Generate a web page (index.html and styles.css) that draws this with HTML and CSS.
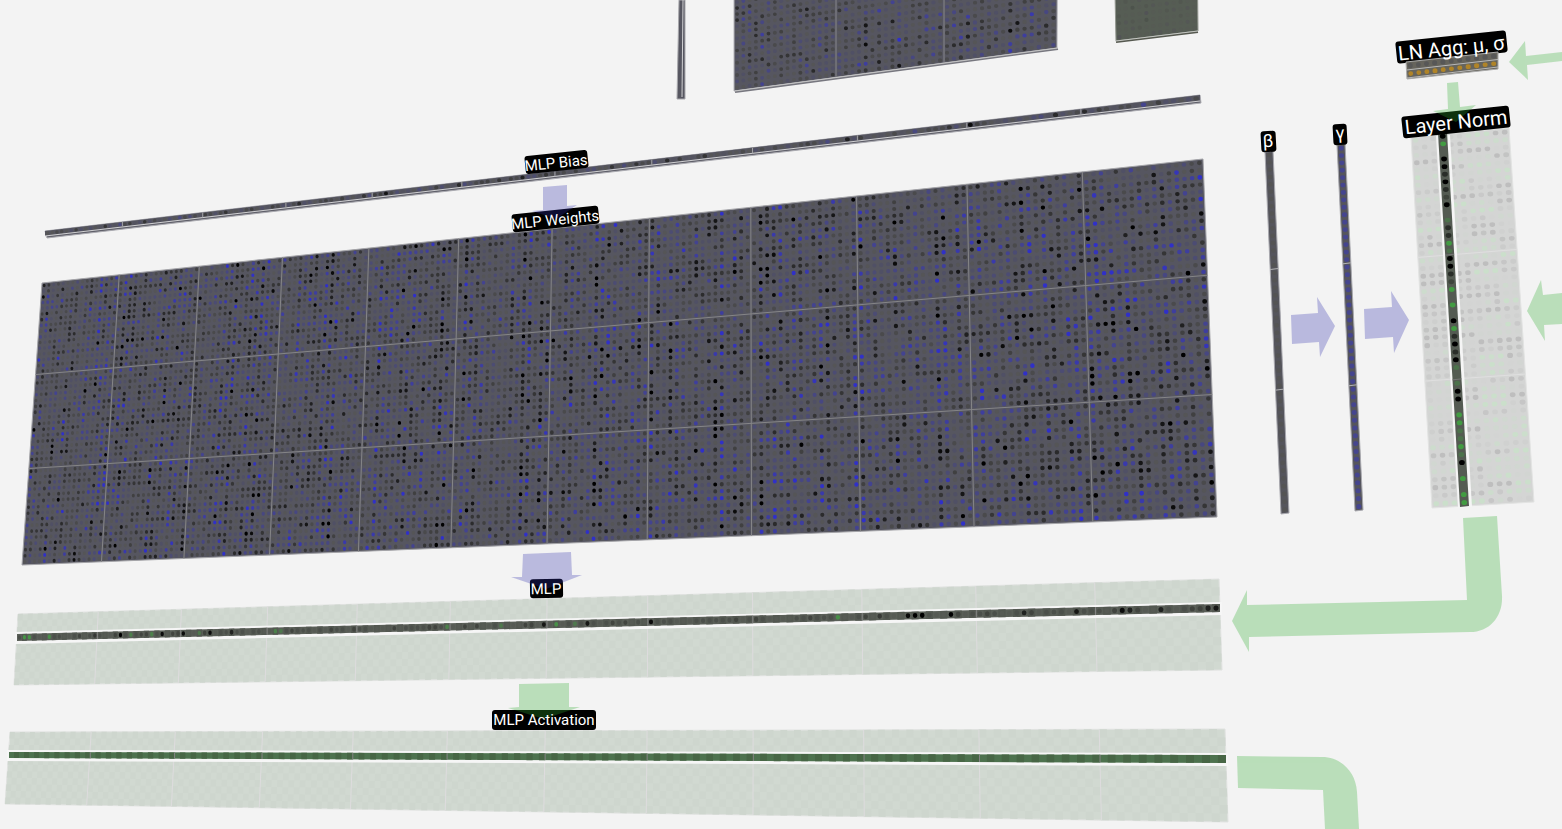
FILE: index.html
```
<!DOCTYPE html>
<html lang="en">
<head>
<meta charset="utf-8">
<title>Transformer layer view</title>
<link rel="stylesheet" href="styles.css">
</head>
<body>
<main class="view">
<svg class="scene" viewBox="0 0 1562 829" preserveAspectRatio="xMidYMid slice" role="img" aria-label="MLP and layer norm of a transformer block">
  <g id="panels"></g>
  <g class="plates">
    <rect x="525" y="153" width="63" height="18" rx="3" transform="rotate(-6 556 162)"/>
    <rect x="512" y="210" width="87" height="18" rx="3" transform="rotate(-6 555 219)"/>
    <rect x="530" y="579" width="33" height="19" rx="3" transform="rotate(-1 546 588)"/>
    <rect x="492" y="710" width="104" height="20" rx="3"/>
    <rect x="1396" y="36" width="111" height="22" rx="3" transform="rotate(-6 1451 47)"/>
    <rect x="1402" y="111" width="108" height="22" rx="3" transform="rotate(-6 1456 122)"/>
    <rect x="1261" y="131" width="15" height="21" rx="3" transform="rotate(-3 1268 142)"/>
    <rect x="1333" y="124" width="14" height="21" rx="3" transform="rotate(-3 1340 134)"/>
  </g>
  <g id="front"></g>
  <g class="arrows weight">
    <path d="M543 187L567 185L567 206L577 205L556 219L532 211L543 210Z"/>
    <path d="M523 554L571 552L572 575L582 575L546 589L511 577L522 577Z"/>
    <path d="M1291 315L1318 313L1317 297L1335 326L1320 357L1319 342L1292 344Z"/>
    <path d="M1364 309L1392 307L1391 291L1409 320L1394 353L1393 337L1365 339Z"/>
  </g>
  <g class="arrows flow">
    <path d="M519 684L569 683L569 707L580 707L544 719L508 708L519 707Z"/>
    <path d="M1447 83L1458 82L1460 107L1476 105L1456 122L1433 111L1448 109Z"/>
    <path d="M1509 62L1525 41L1526 56L1562 52V61L1527 65L1528 80Z"/>
    <path d="M1527 311L1541 280L1543 295L1562 293V324L1544 325L1545 341Z"/>
    <path d="M1463 518L1497 516L1502 596C1503 616 1490 632 1470 632L1249 637L1249 652L1232 621L1247 590L1247 605L1467 600Z"/>
    <path d="M1237 756L1322 757C1341 757 1356 772 1357 792L1359 829H1325L1323 790L1238 788Z"/>
  </g>
  <g class="names">
    <text x="556" y="168" transform="rotate(-6 556 162)">MLP Bias</text>
    <text x="555" y="225" transform="rotate(-6 555 219)">MLP Weights</text>
    <text x="546" y="594" transform="rotate(-1 546 588)">MLP</text>
    <text x="544" y="725">MLP Activation</text>
    <text class="large" x="1451" y="55" transform="rotate(-6 1451 47)">LN Agg: μ, σ</text>
    <text class="large" x="1456" y="129" transform="rotate(-6 1456 122)">Layer Norm</text>
    <text class="mid" x="1268" y="147" transform="rotate(-3 1268 142)">β</text>
    <text class="mid" x="1340" y="139" transform="rotate(-3 1340 134)">γ</text>
  </g>
</svg>
</main>
<script src="scene.js"></script>
</body>
</html>
```
FILE: styles.css
```
body {
  margin: 0;
  background: #f3f3f3;
  font-family: Roboto, "Liberation Sans", sans-serif;
}
.view {
  height: 100vh;
  overflow: hidden;
}
.scene {
  display: block;
  width: 100%;
  height: 100%;
}
.plates {
  fill: #000;
}
.arrows {
  opacity: 0.29;
}
.arrows.weight {
  fill: #3030ae;
}
.arrows.flow {
  fill: #30ae30;
}
.names {
  fill: #fff;
  font-size: 15px;
  text-anchor: middle;
}
.names .mid {
  font-size: 18px;
}
.names .large {
  font-size: 20px;
}
```
FILE: scene.js
```
const NS = 'http://www.w3.org/2000/svg';
let seed = 20231;
function rnd() {
  seed = (seed + 0x6D2B79F5) | 0;
  let t = Math.imul(seed ^ (seed >>> 15), 1 | seed);
  t = (t + Math.imul(t ^ (t >>> 7), 61 | t)) ^ t;
  return ((t ^ (t >>> 14)) >>> 0) / 4294967296;
}
function gauss() {
  return Math.sqrt(-2 * Math.log(rnd() + 1e-9)) * Math.cos(6.2832 * rnd());
}
const panels = document.getElementById('panels');
const front = document.getElementById('front');

function path(parent, d, attrs) {
  const el = document.createElementNS(NS, 'path');
  el.setAttribute('d', d);
  for (const k in attrs) el.setAttribute(k, attrs[k]);
  parent.appendChild(el);
}
const persp = (t, k) => t / (t + (1 - t) * k);

// A quad given clockwise from the top left, split into cols x rows cells.
function panel(q, cols, rows, ku, kv) {
  const at = (c, r) => {
    const u = persp(c / cols, ku), v = persp(r / rows, kv);
    const x0 = q[0][0] + (q[1][0] - q[0][0]) * u, y0 = q[0][1] + (q[1][1] - q[0][1]) * u;
    const x1 = q[3][0] + (q[2][0] - q[3][0]) * u, y1 = q[3][1] + (q[2][1] - q[3][1]) * u;
    return [x0 + (x1 - x0) * v, y0 + (y1 - y0) * v];
  };
  return { at, cols, rows };
}
const f = p => p[0].toFixed(2) + ' ' + p[1].toFixed(2);
function area(p, c0, r0, c1, r1) {
  return 'M' + f(p.at(c0, r0)) + 'L' + f(p.at(c1, r0)) + 'L' + f(p.at(c1, r1)) + 'L' + f(p.at(c0, r1)) + 'Z';
}
function line(p, c0, r0, c1, r1) {
  return 'M' + f(p.at(c0, r0)) + 'L' + f(p.at(c1, r1));
}
function dot(p, c, r, s) {
  const a = p.at(c, r), b = p.at(c + 1, r), d = p.at(c, r + 1), m = p.at(c + 0.5, r + 0.5);
  const rx = Math.hypot(b[0] - a[0], b[1] - a[1]) * s, ry = Math.hypot(d[0] - a[0], d[1] - a[1]) * s;
  return `M${(m[0] - rx).toFixed(2)} ${m[1].toFixed(2)}a${rx.toFixed(2)} ${ry.toFixed(2)} 0 1 0 ${(2 * rx).toFixed(2)} 0a${rx.toFixed(2)} ${ry.toFixed(2)} 0 1 0 ${(-2 * rx).toFixed(2)} 0`;
}
function mix(a, b, t) {
  return 'rgb(' + a.map((x, i) => Math.round(x + (b[i] - x) * t)).join(',') + ')';
}
function dots(parent, p, size, value, low, pos, neg) {
  const buckets = {};
  for (let r = 0; r < p.rows; r++) for (let c = 0; c < p.cols; c++) {
    const v = value(c, r);
    if (v === null) continue;
    const k = Math.max(-8, Math.min(8, Math.round(v * 8)));
    buckets[k] = (buckets[k] || '') + dot(p, c, r, size);
  }
  for (const k in buckets) path(parent, buckets[k], { fill: mix(low, k > 0 ? pos : neg, Math.abs(k) / 8) });
}
function splits(parent, p, stroke, horizontal = true) {
  let d = '';
  for (let c = 16; c < p.cols; c += 16) d += line(p, c, 0, c, p.rows);
  if (horizontal) for (let r = 16; r < p.rows; r += 16) d += line(p, 0, r, p.cols, r);
  path(parent, d, { stroke, 'stroke-width': 1, fill: 'none' });
}
const SLATE = '#565660', GREY = [85, 85, 87], BLUE = [48, 48, 200], BLACK = [0, 0, 0];
function weights(p, gain) {
  const colScale = Array.from({ length: p.cols }, () => 0.5 + rnd());
  const colBias = Array.from({ length: p.cols }, () => gauss() * 0.08);
  return c => (gauss() * 0.52 * colScale[c] + colBias[c]) * gain;
}

// Upper weights
const upper = panel([[734, -100], [1058, -163], [1057, 48], [734, 91]], 48, 32, 1.083, 1.04);
path(panels, area(upper, 0, 0, 48, 32), { fill: SLATE, stroke: '#b5b5ba' });
dots(panels, upper, 0.3, weights(upper, 0.5), GREY, BLUE, BLACK);
path(panels, 'M836 0V78M944 0V64', { stroke: '#85858a' });
path(panels, 'M735 92L1058 49', { stroke: '#77777f', 'stroke-width': 2 });
path(panels, 'M735 91L1058 48', { stroke: '#c4c4c4', 'stroke-width': 1 });

// Upper bias
path(panels, 'M679 0H685V99H677Z', { fill: SLATE, stroke: '#a8a8ac' });
path(panels, 'M683 0L682 97', { stroke: '#d2d2d4', 'stroke-width': 1 });

// Upper residual block
const block = panel([[1114, -56], [1197, -66], [1198, 31], [1116, 41]], 12, 14, 1, 1);
path(panels, area(block, 0, 0, 12, 14), { fill: '#565d54', stroke: '#92968f' });
dots(panels, block, 0.3, () => gauss() * 0.08, [86, 91, 84], [70, 60, 90], [50, 60, 50]);
path(panels, 'M1116 42L1198 32', { stroke: '#55584f', 'stroke-width': 2 });
path(panels, 'M1116 41L1198 31', { stroke: '#c4c6c2' });

// MLP bias
const bias = panel([[45, 231], [1200, 95], [1200, 101], [45, 236]], 192, 1, 1.265, 1);
path(panels, 'M45 231L1200 95L1201 103L47 238Z', { fill: '#60606a', stroke: '#aaaab0', 'stroke-width': 1 });
path(panels, area(bias, 0, 0, 192, 1), { fill: SLATE });
dots(panels, bias, 0.36, () => gauss() * 0.25, GREY, [65, 65, 150], BLACK);
path(panels, line(bias, 0, 1, 192, 1), { stroke: '#d0d0d2' });
splits(panels, bias, '#a0a0a4', false);

// MLP weights
const mlp = panel([[42, 283], [1203, 159], [1217, 517], [22, 565]], 192, 48, 1.276, 1.04);
path(panels, area(mlp, 0, 0, 192, 48), { fill: SLATE, stroke: '#a4a4a8' });
dots(panels, mlp, 0.3, weights(mlp, 0.82), GREY, BLUE, BLACK);
splits(panels, mlp, '#858587');

// Beta and gamma
const beta = panel([[1265, 152], [1273, 151], [1289, 513], [1281, 514]], 1, 48, 1, 1.04);
const gamma = panel([[1337, 145], [1345, 144], [1363, 510], [1355, 511]], 1, 48, 1, 1.04);
for (const p of [beta, gamma]) path(panels, area(p, 0, 0, 1, 48), { fill: '#55555c', stroke: '#a8a8ae' });
dots(panels, beta, 0.3, () => 0.05, [84, 84, 84], [84, 84, 84], [84, 84, 84]);
dots(panels, gamma, 0.32, () => 1, GREY, [69, 69, 142], BLACK);
splits(panels, beta, '#b4b4b6');
splits(panels, gamma, '#b4b4b6');

// Wide activations: checkered, with one highlighted row
function activation(q, tones, left, right) {
  const p = panel(q, 192, 11, 1.27, 1);
  path(panels, area(p, 0, 0, 192, 11), { fill: '#d1d9d1', stroke: '#e0e2e0' });
  let even = '';
  for (let r = 0; r < 11; r++) for (let c = r % 2; c < 192; c += 2) even += area(p, c, r, c + 1, r + 1);
  path(panels, even, { fill: '#ced6ce' });
  splits(panels, p, '#dedcde', false);
  const strip = panel([[q[0][0] - 1, left[0]], [q[1][0] + 1, right[0]], [q[1][0] + 1, right[1]], [q[0][0] - 1, left[1]]], 192, 1, 1.27, 1);
  path(panels, `M${q[0][0] - 3} ${left[0] - 2}L${q[1][0] + 3} ${right[0] - 2}V${right[1] + 3}L${q[0][0] - 3} ${left[1] + 3}Z`, { fill: '#f6f6f6' });
  path(panels, area(strip, 0, 0, 192, 1), { fill: tones[0] });
  let alt = '';
  for (let c = 1; c < 192; c += 2) alt += area(strip, c, 0, c + 1, 1);
  path(panels, alt, { fill: tones[1] });
  splits(panels, strip, '#858585', false);
  return strip;
}
const pre = activation([[18, 614], [1219, 579], [1222, 670], [14, 685]], ['#5a5f58', '#535851'], [634, 641], [604, 612]);
const marks = { 24: 1, 29: 1, 48: 0.9, 129: 0.6, 150: 0.6, 197: 0.5, 273: 0.6, 279: 0.5, 450: 0.6, 503: 0.5, 559: 0.9, 578: 0.5, 835: 0.9, 119: -1, 160: -0.9, 181: -0.9, 208: -0.9, 229: -0.6, 541: -0.8, 590: -0.7, 648: -0.9, 906: -0.9, 912: -1, 920: -1, 949: -1, 1022: -0.6, 1075: -0.8, 1121: -0.9, 1129: -0.6, 1160: -0.6, 1208: -0.6, 1216: -0.8 };
const marked = {};
for (const x in marks) {
  let best = 0, gap = 1e9;
  for (let c = 0; c < 192; c++) {
    const g = Math.abs(pre.at(c + 0.5, 0)[0] - x);
    if (g < gap) { gap = g; best = c; }
  }
  marked[best] = marks[x];
}
dots(panels, pre, 0.32, c => marked[c] || -Math.abs(gauss()) * 0.14, [86, 90, 84], [70, 150, 70], BLACK);
activation([[10, 732], [1225, 729], [1228, 822], [5, 804]], ['#4d724e', '#476645'], [752, 758], [755, 763]);

// Layer norm
const norm = panel([[1411, 137], [1509, 128], [1534, 502], [1432, 508]], 11, 48, 1.03, 1.04);
path(panels, area(norm, 0, 0, 11, 48), { fill: '#d4d5d4', stroke: '#e2e3e2' });
const rowTone = Array.from({ length: 48 }, () => [gauss(), gauss(), gauss(), gauss()]);
dots(panels, norm, 0.31, (c, r) => rowTone[r][Math.floor(c / 3)] * 0.65 + gauss() * 0.3, [211, 212, 211], [203, 223, 203], [190, 190, 190]);
splits(panels, norm, '#dfdfdf');
path(panels, 'M1436 136L1450 135L1472 507L1458 508Z', { fill: '#f5f5f5' });
const column = panel([[1438, 133], [1447, 132], [1469, 506], [1460, 507]], 1, 48, 1, 1.03);
path(panels, area(column, 0, 0, 1, 48), { fill: '#545b52' });
const code = 'bg.bbdbd-b.eddgebbd-g.g.bgdbdbe.ebb.ggeegeb.g.gg';
const tone = { b: -1, d: -0.55, '-': -0.2, g: 1, e: 0.35 };
dots(panels, column, 0.32, (c, r) => tone[code[r]] ?? null, [82, 90, 80], [66, 155, 66], BLACK);
splits(panels, column, '#777');

// Layer norm aggregates
const agg = panel([[1406, 62], [1498, 52], [1498, 67], [1407, 78]], 11, 2, 1.04, 1);
path(front, 'M1406 62L1498 52V69L1407 79Z', { fill: '#66645c', stroke: '#aaa', 'stroke-width': 1 });
dots(front, agg, 0.3, (c, r) => r ? 1 : -0.2, [92, 92, 92], [176, 132, 40], [70, 70, 70]);
path(front, line(agg, 0, 1, 11, 1) + line(agg, 0, 2, 11, 2), { stroke: '#b8b8b8' });
```
